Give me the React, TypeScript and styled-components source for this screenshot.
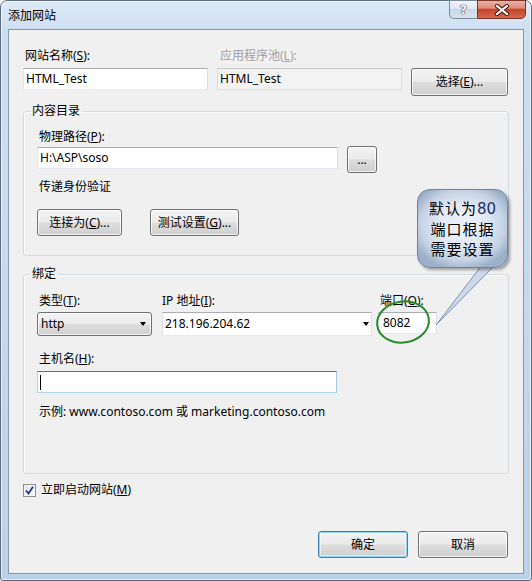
import React from "react";
import styled, { createGlobalStyle } from "styled-components";

const GlobalStyle = createGlobalStyle`
  html, body { margin: 0; padding: 0; background: #ffffff; }
  body {
    font-family: "Noto Sans", "Noto Sans CJK SC", sans-serif;
    font-size: 12px;
    line-height: 16px;
    color: #000;
  }
  * { box-sizing: border-box; }
`;

const Window = styled.div`
  position: relative;
  width: 532px;
  height: 581px;
  display: flex;
  flex-direction: column;
  padding: 0 7px 6px;
  border: 1px solid #5f6c7d;
  border-radius: 7px 7px 3px 3px;
  background: linear-gradient(180deg, #dfeaf7 0px, #cfdff2 28px, #c4d8ee 55%, #bcd2eb 100%);
  box-shadow: inset 0 0 0 1px rgba(255, 255, 255, 0.55);
`;

const TitleBar = styled.div`
  height: 28px;
  display: flex;
  align-items: flex-start;
`;

const Title = styled.div`
  flex: 1;
  align-self: center;
  font-family: "Noto Sans CJK SC", sans-serif;
  font-size: 12px;
  color: #000;
`;

const CaptionButtons = styled.div`
  display: flex;
  margin-top: -1px;
  margin-right: -2px;
`;

const HelpButton = styled.div`
  width: 28px;
  height: 19px;
  border: 1px solid #7c899a;
  border-right: none;
  border-radius: 0 0 0 5px;
  background: linear-gradient(180deg, #f3f6fb 0%, #dfe7f2 45%, #cbd8e8 50%, #d9e3ef 100%);
  display: flex;
  align-items: center;
  justify-content: center;
  font-family: "DejaVu Sans", sans-serif;
  font-weight: bold;
  font-size: 12px;
  color: #f4f6f9;
  text-shadow: 0 0 1px #445, 0 0 1px #445, 0 0 1px #445;
`;

const CloseButton = styled.div`
  width: 49px;
  height: 19px;
  border: 1px solid #7a3328;
  border-radius: 0 0 5px 0;
  background: linear-gradient(180deg, #ebb3a7 0%, #dd8a76 42%, #c8452e 50%, #d4674e 100%);
  display: flex;
  align-items: center;
  justify-content: center;
`;

const Client = styled.div`
  flex: 1;
  display: flex;
  flex-direction: column;
  background: #f0f0f0;
  border: 1px solid #8796ab;
  padding: 18px 14px 15px 14px;
`;

const TopGrid = styled.div`
  display: grid;
  grid-template-columns: 185px 185px 97px;
  column-gap: 9px;
  row-gap: 4px;
  align-items: start;
`;

const Label = styled.div<{ $indent?: number; $disabled?: boolean }>`
  padding-left: ${(p) => p.$indent ?? 2}px;
  line-height: 16px;
  color: ${(p) => (p.$disabled ? "#a0a0a0" : "#000")};
  white-space: nowrap;
`;

const TextBox = styled.div<{ $width?: number; $variant?: "normal" | "disabled" | "focused"; $padLeft?: number }>`
  width: ${(p) => (p.$width ? `${p.$width}px` : "100%")};
  height: 22px;
  line-height: 20px;
  padding: 0 2px 0 ${(p) => p.$padLeft ?? 2}px;
  display: flex;
  align-items: center;
  white-space: nowrap;
  background: ${(p) => (p.$variant === "disabled" ? "#f3f3f3" : "#ffffff")};
  border: 1px solid;
  border-color: ${(p) =>
    p.$variant === "focused"
      ? "#3d7bad #a4c9e3 #b7d9ed #b5cfe7"
      : p.$variant === "disabled"
      ? "#c8c8c8 #dcdcdc #e0e0e0 #dcdcdc"
      : "#abadb3 #dbdfe6 #e3e9ef #e2e3ea"};
`;

const Caret = styled.span`
  display: inline-block;
  width: 1px;
  height: 15px;
  background: #000;
`;

const Button = styled.button<{ $w: number; $h?: number; $default?: boolean }>`
  width: ${(p) => p.$w}px;
  height: ${(p) => p.$h ?? 27}px;
  margin: 0;
  padding: 0;
  font-family: "Noto Sans", "Noto Sans CJK SC", sans-serif;
  font-size: 12px;
  line-height: 16px;
  color: #000;
  border: 1px solid ${(p) => (p.$default ? "#3c7fb1" : "#707070")};
  border-radius: 3px;
  background: linear-gradient(180deg, #f2f2f2 0%, #ebebeb 49%, #dddddd 51%, #cfcfcf 100%);
  box-shadow: ${(p) =>
    p.$default ? "inset 0 0 0 1px #8fd3f5, inset 0 0 0 2px rgba(255,255,255,0.5)" : "inset 0 0 0 1px rgba(255,255,255,0.75)"};
  display: flex;
  align-items: center;
  justify-content: center;
  white-space: nowrap;
`;

const GroupBox = styled.fieldset<{ $mt: number }>`
  margin: ${(p) => p.$mt}px 0 0 0;
  padding: 0;
  min-width: 0;
  border: 1px solid #d3dbe2;
  border-radius: 3px;
  box-shadow: inset 1px 1px 0 rgba(255, 255, 255, 0.7);
`;

const Legend = styled.legend`
  margin-left: 6px;
  padding: 0 2px;
  line-height: 16px;
  font-size: 12px;
`;

const GroupBody = styled.div<{ $pt: number; $pb: number }>`
  display: flex;
  flex-direction: column;
  padding: ${(p) => p.$pt}px 13px ${(p) => p.$pb}px 13px;
`;

const PathRow = styled.div`
  display: flex;
  align-items: flex-start;
  gap: 9px;
  margin-top: 1px;
`;

const PathBox = styled(TextBox)`
  margin-top: 1px;
`;

const Spaced = styled.div<{ $mt: number }>`
  margin-top: ${(p) => p.$mt}px;
`;

const ButtonRow = styled.div<{ $gap: number; $mt: number }>`
  display: flex;
  gap: ${(p) => p.$gap}px;
  margin-top: ${(p) => p.$mt}px;
`;

const BindGrid = styled.div`
  display: grid;
  grid-template-columns: 115px 210px 59px;
  column-gap: 10px;
  row-gap: 3px;
  align-items: start;
  & > :nth-child(3n) {
    margin-left: -4px;
  }
`;

const ComboButton = styled.div`
  height: 24px;
  border: 1px solid #707070;
  border-radius: 3px;
  background: linear-gradient(180deg, #f2f2f2 0%, #ebebeb 49%, #dddddd 51%, #cfcfcf 100%);
  box-shadow: inset 0 0 0 1px rgba(255, 255, 255, 0.75);
  display: flex;
  align-items: center;
  justify-content: space-between;
  padding: 0 5px 0 3px;
`;

const ComboEdit = styled.div`
  height: 24px;
  background: #fff;
  border: 1px solid;
  border-color: #abadb3 #dbdfe6 #e3e9ef #e2e3ea;
  display: flex;
  align-items: center;
  justify-content: space-between;
  padding: 0 2px 0 2px;
`;

const PortBox = styled(TextBox)`
  margin-top: 0;
`;

const Arrow = styled.span`
  width: 0;
  height: 0;
  border-left: 3.5px solid transparent;
  border-right: 3.5px solid transparent;
  border-top: 4px solid #000;
`;

const CheckRow = styled.label`
  display: flex;
  align-items: center;
  gap: 5px;
  margin-top: 8px;
  line-height: 16px;
`;

const CheckBox = styled.span`
  width: 13px;
  height: 13px;
  border: 1px solid #8e8f8f;
  background: linear-gradient(135deg, #dcdcdc 0%, #f6f6f6 70%, #ffffff 100%);
  box-shadow: inset 0 0 0 1px #f4f4f4;
  display: flex;
  align-items: center;
  justify-content: center;
`;

const Footer = styled.div`
  margin-top: auto;
  display: flex;
  justify-content: flex-end;
  gap: 10px;
  padding-right: 1px;
`;

const Overlay = styled.svg`
  position: absolute;
  left: -1px;
  top: -1px;
  width: 532px;
  height: 581px;
  pointer-events: none;
`;

const Bubble = styled.div`
  position: absolute;
  left: 416px;
  top: 188px;
  width: 91px;
  height: 79px;
  border: 1px solid #6f83a0;
  border-radius: 13px;
  background: radial-gradient(ellipse 60% 58% at 50% 46%, #eef3fa 0%, #e2e9f4 45%, #c7d3e4 78%, #9db0c9 100%);
  box-shadow: 2px 2px 3px rgba(0, 0, 0, 0.35);
  padding-top: 8px;
  display: flex;
  flex-direction: column;
  align-items: center;
  font-family: "Noto Sans CJK SC", sans-serif;
  font-size: 15px;
  letter-spacing: 1px;
  color: #000;
`;

const BubbleLine = styled.div`
  height: 20.5px;
  line-height: 20.5px;
  white-space: nowrap;
`;

const Digits = styled.span`
  color: #1c2f66;
  font-family: "DejaVu Sans", sans-serif;
  letter-spacing: 0;
`;

export default function App() {
  return (
    <>
      <GlobalStyle />
      <Window>
        <TitleBar>
          <Title>添加网站</Title>
          <CaptionButtons>
            <HelpButton>?</HelpButton>
            <CloseButton>
              <svg width="16" height="12" viewBox="0 0 16 12">
                <path d="M3 2 L13 10 M13 2 L3 10" stroke="#5a2018" strokeWidth="4.2" strokeLinecap="round" />
                <path d="M3 2 L13 10 M13 2 L3 10" stroke="#ffffff" strokeWidth="2.2" strokeLinecap="round" />
              </svg>
            </CloseButton>
          </CaptionButtons>
        </TitleBar>
        <Client>
          <TopGrid>
            <Label>
              网站名称(<u>S</u>):
            </Label>
            <Label $indent={3} $disabled>
              应用程序池(<u>L</u>):
            </Label>
            <span />
            <TextBox>HTML_Test</TextBox>
            <TextBox $variant="disabled">HTML_Test</TextBox>
            <Button $w={97} $h={28}>
              选择(<u>E</u>)...
            </Button>
          </TopGrid>

          <GroupBox $mt={7}>
            <Legend>内容目录</Legend>
            <GroupBody $pt={10} $pb={19}>
              <Label>
                物理路径(<u>P</u>):
              </Label>
              <PathRow>
                <PathBox $width={301}>H:\ASP\soso</PathBox>
                <Button $w={30}>...</Button>
              </PathRow>
              <Spaced $mt={6}>
                <Label>传递身份验证</Label>
              </Spaced>
              <ButtonRow $gap={28} $mt={14}>
                <Button $w={85}>
                  连接为(<u>C</u>)...
                </Button>
                <Button $w={89}>
                  测试设置(<u>G</u>)...
                </Button>
              </ButtonRow>
            </GroupBody>
          </GroupBox>

          <GroupBox $mt={10}>
            <Legend>绑定</Legend>
            <GroupBody $pt={11} $pb={53}>
              <BindGrid>
                <Label>
                  类型(<u>T</u>):
                </Label>
                <Label $indent={0}>
                  IP 地址(<u>I</u>):
                </Label>
                <Label>
                  端口(<u>O</u>):
                </Label>
                <ComboButton>
                  <span>http</span>
                  <Arrow />
                </ComboButton>
                <ComboEdit>
                  <span>218.196.204.62</span>
                  <Arrow />
                </ComboEdit>
                <PortBox $padLeft={4}>8082</PortBox>
              </BindGrid>
              <Spaced $mt={15}>
                <Label>
                  主机名(<u>H</u>):
                </Label>
              </Spaced>
              <Spaced $mt={4}>
                <TextBox $width={300} $variant="focused">
                  <Caret />
                </TextBox>
              </Spaced>
              <Spaced $mt={11}>
                <Label>示例: www.contoso.com 或 marketing.contoso.com</Label>
              </Spaced>
            </GroupBody>
          </GroupBox>

          <CheckRow>
            <CheckBox>
              <svg width="9" height="9" viewBox="0 0 9 9">
                <path d="M1 4.5 L3.5 7.5 L8 0.8" stroke="#1f3a87" strokeWidth="1.8" fill="none" />
              </svg>
            </CheckBox>
            <span>
              立即启动网站(<u>M</u>)
            </span>
          </CheckRow>

          <Footer>
            <Button $w={90} $default>
              确定
            </Button>
            <Button $w={90}>取消</Button>
          </Footer>
        </Client>

        <Overlay viewBox="0 0 532 581">
          <path d="M482 265 L495 265 L436 325 Z" fill="#cdd8e8" stroke="#8194ae" strokeWidth="1" />
          <ellipse cx="403" cy="322" rx="26" ry="20.5" fill="none" stroke="#2a8a2a" strokeWidth="2" transform="rotate(-8 403 322)" />
        </Overlay>
        <Bubble>
          <BubbleLine>
            默认为<Digits>80</Digits>
          </BubbleLine>
          <BubbleLine>端口根据</BubbleLine>
          <BubbleLine>需要设置</BubbleLine>
        </Bubble>
      </Window>
    </>
  );
}
